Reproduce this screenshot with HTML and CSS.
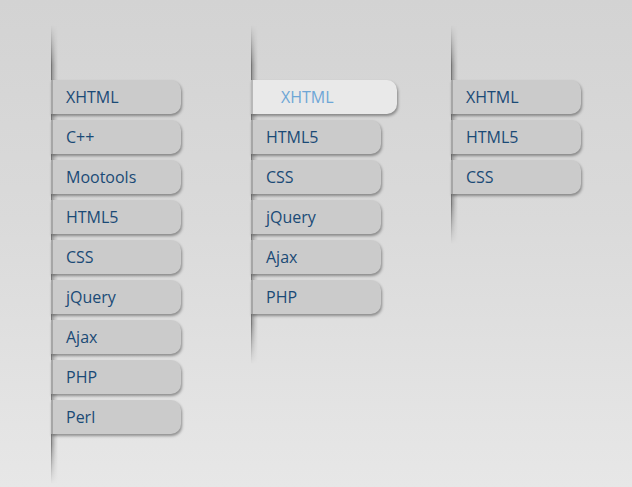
FILE: index.html
```
<!DOCTYPE html>
<html lang="en">
<head>
<meta charset="utf-8">
<title>Sliding menus</title>
<link rel="stylesheet" href="styles.css">
</head>
<body>
<div class="menus">
  <ul class="menu">
    <li><a href="#">XHTML</a></li>
    <li><a href="#">C++</a></li>
    <li><a href="#">Mootools</a></li>
    <li><a href="#">HTML5</a></li>
    <li><a href="#">CSS</a></li>
    <li><a href="#">jQuery</a></li>
    <li><a href="#">Ajax</a></li>
    <li><a href="#">PHP</a></li>
    <li><a href="#">Perl</a></li>
  </ul>
  <ul class="menu">
    <li><a href="#" class="active">XHTML</a></li>
    <li><a href="#">HTML5</a></li>
    <li><a href="#">CSS</a></li>
    <li><a href="#">jQuery</a></li>
    <li><a href="#">Ajax</a></li>
    <li><a href="#">PHP</a></li>
  </ul>
  <ul class="menu">
    <li><a href="#">XHTML</a></li>
    <li><a href="#">HTML5</a></li>
    <li><a href="#">CSS</a></li>
  </ul>
</div>
</body>
</html>
```
FILE: styles.css
```
html, body {
  margin: 0;
  height: 100%;
}

body {
  background: linear-gradient(to bottom, #d3d3d3 0%, #dadada 45%, #e7e7e7 100%);
  font-family: "Open Sans", "DejaVu Sans", sans-serif;
  overflow: hidden;
}

.menus {
  display: flex;
  align-items: flex-start;
  padding: 25px 0 0 51px;
}

.menu {
  position: relative;
  flex: 0 0 200px;
  list-style: none;
  margin: 0;
  padding: 55px 0 50px;
  display: flex;
  flex-direction: column;
  gap: 6px;
}

/* the vertical rail each menu hangs from */
.menu::before {
  content: "";
  position: absolute;
  left: 0;
  top: 0;
  bottom: 0;
  width: 7px;
  background: linear-gradient(to right, rgba(0, 0, 0, 0.6) 0, rgba(0, 0, 0, 0.3) 1px, rgba(0, 0, 0, 0.1) 4px, rgba(0, 0, 0, 0) 7px);
  -webkit-mask-image: linear-gradient(to bottom, transparent 0, #000 40px, #000 calc(100% - 40px), transparent 100%);
  mask-image: linear-gradient(to bottom, transparent 0, #000 40px, #000 calc(100% - 40px), transparent 100%);
}

.menu li {
  position: relative;
  z-index: 1;
}

.menu a {
  display: block;
  box-sizing: border-box;
  width: 130px;
  height: 34px;
  line-height: 34px;
  padding-left: 13px;
  font-size: 16px;
  color: #1a4a76;
  text-decoration: none;
  background: #cbcbcb;
  border-left: 2px solid #a6a6a6;
  border-radius: 0 10px 10px 0;
  box-shadow: 1px 2px 3px rgba(0, 0, 0, 0.38);
}

.menu a.active {
  width: 146px;
  padding-left: 28px;
  background: #e9e9e9;
  color: #6ea6d6;
  border-left-color: #b8b8b8;
}
```
